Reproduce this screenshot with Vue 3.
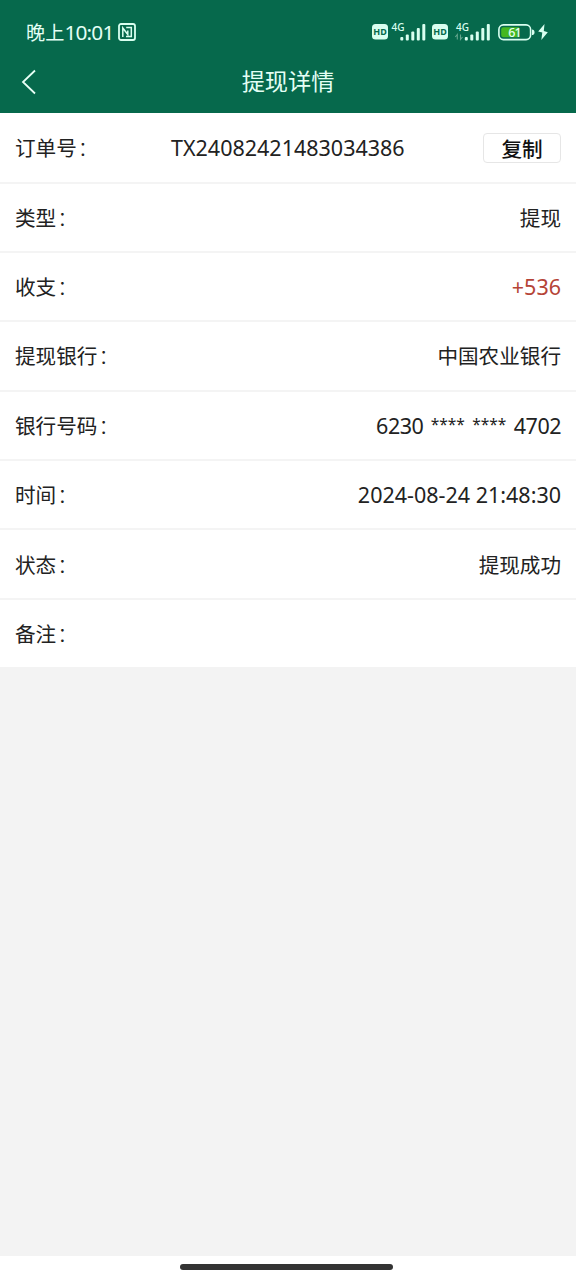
<script setup>
const rows = [
  { label: '类型', value: '提现' },
  { label: '收支', value: '+536', kind: 'latin amount' },
  { label: '提现银行', value: '中国农业银行' },
  { label: '银行号码', card: ['6230', '****', '****', '4702'] },
  { label: '时间', value: '2024-08-24 21:48:30', kind: 'latin' },
  { label: '状态', value: '提现成功' },
  { label: '备注', value: '' },
]
</script>

<template>
  <div class="screen">
    <header class="top">
      <div class="status">
        <span class="clock-cn">晚上</span><span class="clock">10:01</span>
        <svg class="nfc" width="18" height="18" viewBox="0 0 18 18" fill="none" stroke="#d9fff0" stroke-width="1.8">
          <rect x="1" y="1" width="16" height="16" rx="2" />
          <path d="M4.800 14V5L9.800 11.500V7.500M8.200 4.500H13.300V13.500H8" stroke-width="1.500" />
        </svg>
        <svg class="signals" width="182" height="26" viewBox="0 0 182 26">
          <g fill="#d9fff0">
            <rect x="2" y="5" width="16" height="15.500" rx="3.500" />
            <rect x="62" y="5" width="16" height="15.500" rx="3.500" />
            <text x="21.500" y="12" class="net">4G</text>
            <text x="86" y="12" class="net">4G</text>
            <rect x="30.300" y="18" width="3" height="3.500" rx="1" />
            <rect x="35.800" y="15.500" width="3" height="6" rx="1" />
            <rect x="41.300" y="12.500" width="3" height="9" rx="1" />
            <rect x="46.800" y="9" width="3" height="12.500" rx="1" />
            <rect x="52.300" y="5" width="3" height="16.500" rx="1" />
            <rect x="94.800" y="18" width="3" height="3.500" rx="1" />
            <rect x="100.300" y="15.500" width="3" height="6" rx="1" />
            <rect x="105.800" y="12.500" width="3" height="9" rx="1" />
            <rect x="111.300" y="9" width="3" height="12.500" rx="1" />
            <rect x="116.800" y="5" width="3" height="16.500" rx="1" />
            <path d="M162 10.500q2.500 0 2.500 2.800t-2.500 2.800z" />
            <path d="M174.500 5L168.200 12.500L172.300 13.600L171.300 21L177.800 13.300L173.800 12z" />
          </g>
          <g fill="none" stroke="#65a68e" stroke-width="1.100">
            <path d="M87.300 20.500v-5l-2 2.500M90.500 15.500v5l2-2.500" />
          </g>
          <text x="10" y="16" class="hd">HD</text>
          <text x="70" y="16" class="hd">HD</text>
          <rect x="128.900" y="5.900" width="31.700" height="14.700" rx="4.500" fill="none" stroke="#d9fff0" stroke-width="1.600" />
          <path d="M133.500 8.300H149V18.200H133.500Q131.200 18.200 131.200 15.900V10.600Q131.200 8.300 133.500 8.300Z" fill="#45b820" />
          <text x="144.500" y="17.500" class="level">61</text>
        </svg>
      </div>
      <nav class="nav">
        <svg class="back" width="16" height="26" viewBox="0 0 16 26" fill="none" stroke="#e8fff6" stroke-width="1.800">
          <path d="M14 1.500L2 13L14 24.500" />
        </svg>
        <h1>提现详情</h1>
      </nav>
    </header>

    <main class="list">
      <div class="row first">
        <span class="label">订单号<span class="colon">：</span></span>
        <span class="latin order">TX24082421483034386</span>
        <button class="copy" type="button">复制</button>
      </div>
      <div v-for="row in rows" :key="row.label" class="row">
        <span class="label">{{ row.label }}<span class="colon">：</span></span>
        <span v-if="row.card" class="latin card">
          <span v-for="(part, i) in row.card" :key="i" :class="{ stars: part === '****' }">{{ part }}</span>
        </span>
        <span v-else :class="row.kind">{{ row.value }}</span>
      </div>
    </main>

    <footer class="home"><span class="bar"></span></footer>
  </div>
</template>

<style>
body {
  margin: 0;
}
</style>

<style scoped>
.screen {
  width: 576px;
  height: 1280px;
  display: flex;
  flex-direction: column;
  overflow: hidden;
  background: #f3f3f3;
  color: #222;
  font-family: "Noto Sans CJK SC", sans-serif;
}
.top {
  height: 112.5px;
  flex: none;
  background: #06694c;
  color: #e4fff5;
}
.status {
  height: 64px;
  box-sizing: border-box;
  padding: 0 24px 0 26px;
  display: flex;
  align-items: center;
}
.clock-cn {
  font-size: 19.2px;
  font-weight: 400;
  line-height: 24px;
  padding-bottom: 1px;
}
.clock {
  font: 400 20.8px/24px "Noto Sans", sans-serif;
  letter-spacing: -0.8px;
}
.nfc {
  margin-left: 4px;
}
.signals {
  margin-left: auto;
}
.net {
  font: 500 10px "Noto Sans", sans-serif;
}
.hd {
  font: 700 9px "Noto Sans", sans-serif;
  fill: #06694c;
  text-anchor: middle;
}
.level {
  font: 500 12.5px "Noto Sans", sans-serif;
  fill: #e4fff5;
  text-anchor: middle;
  letter-spacing: -0.8px;
}
.nav {
  height: 36px;
  display: grid;
  grid-template-columns: 60px 1fr 60px;
  align-items: center;
}
.back {
  margin-left: 21px;
}
h1 {
  margin: 0;
  padding-bottom: 3px;
  text-align: center;
  font-size: 23.2px;
  line-height: 33px;
  font-weight: 400;
}
.list {
  flex: none;
  background: #fff;
}
.row {
  height: 69.4px;
  box-sizing: border-box;
  padding: 0 15px 1.2px;
  display: flex;
  align-items: center;
  justify-content: space-between;
  border-bottom: 2px solid #f4f4f4;
  font-size: 20.6px;
  line-height: 30px;
}
.row.first {
  height: 71px;
  padding-bottom: 0;
  display: grid;
  grid-template-columns: 156px 1fr 78px;
}
.row:last-child {
  height: 67.5px;
  border-bottom: 0;
}
.colon {
  margin-left: 1px;
  font-weight: 300;
}
.latin {
  padding-top: 2px;
  font-family: "Noto Sans", sans-serif;
  font-size: 21.5px;
  line-height: 28px;
}
.amount {
  color: #b54437;
}
.card {
  display: flex;
  gap: 7.4px;
  letter-spacing: -0.5px;
}
.stars {
  font-size: 15.5px;
  line-height: 24px;
  letter-spacing: 0;
}
.copy {
  height: 30px;
  margin-top: 1px;
  padding: 0;
  border: 1px solid #e6e6e6;
  border-radius: 4px;
  background: #fff;
  color: #111;
  font: 500 20.6px/26px "Noto Sans CJK SC", sans-serif;
}
.home {
  height: 24px;
  margin-top: auto;
  background: #fff;
  display: flex;
  justify-content: center;
  align-items: flex-start;
}
.bar {
  width: 213px;
  height: 6px;
  margin: 8px 4px 0 0;
  border-radius: 3px;
  background: #333;
}
</style>
